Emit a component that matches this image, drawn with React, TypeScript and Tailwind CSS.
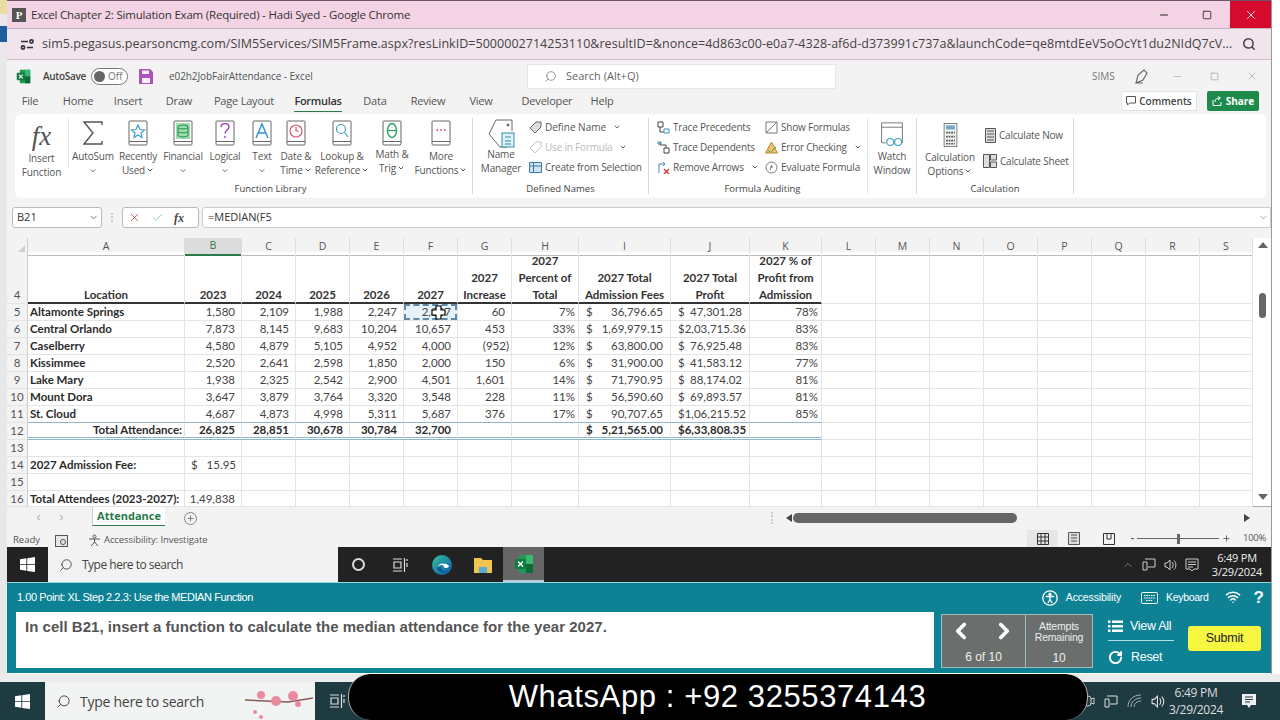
import type { ReactNode } from "react";
import { Check, ChevronDown, ChevronLeft, ChevronRight, Minus, Plus, RotateCw, Search, Square, Wifi, X } from "lucide-react";

const ui = "font-['Open_Sans',sans-serif]";
const sheet = "font-['Lato',sans-serif]";
const arial = "font-['Liberation_Sans',Arial,sans-serif]";
const gridCols = "grid grid-cols-[21px_157px_57px_54px_54px_54px_54px_54px_67px_92px_79px_72px_54px_54px_54px_54px_54px_54px_54px_53px]";
const headCell = "items-end justify-center border-b-[#333] shadow-[inset_0_-1px_0_#333]";
const totalLine = "border-b-[3px] border-double border-b-[#8fb6c9]";

const columns = ["A", "B", "C", "D", "E", "F", "G", "H", "I", "J", "K", "L", "M", "N", "O", "P", "Q", "R", "S"];

const rows = [
    { n: 5, name: "Altamonte Springs", years: ["1,580", "2,109", "1,988", "2,247", "2,307"], inc: "60", pct: "7%", fees: "36,796.65", profit: "47,301.28", share: "78%" },
    { n: 6, name: "Central Orlando", years: ["7,873", "8,145", "9,683", "10,204", "10,657"], inc: "453", pct: "33%", fees: "1,69,979.15", profit: "2,03,715.36", share: "83%" },
    { n: 7, name: "Caselberry", years: ["4,580", "4,879", "5,105", "4,952", "4,000"], inc: "(952)", pct: "12%", fees: "63,800.00", profit: "76,925.48", share: "83%" },
    { n: 8, name: "Kissimmee", years: ["2,520", "2,641", "2,598", "1,850", "2,000"], inc: "150", pct: "6%", fees: "31,900.00", profit: "41,583.12", share: "77%" },
    { n: 9, name: "Lake Mary", years: ["1,938", "2,325", "2,542", "2,900", "4,501"], inc: "1,601", pct: "14%", fees: "71,790.95", profit: "88,174.02", share: "81%" },
    { n: 10, name: "Mount Dora", years: ["3,647", "3,879", "3,764", "3,320", "3,548"], inc: "228", pct: "11%", fees: "56,590.60", profit: "69,893.57", share: "81%" },
    { n: 11, name: "St. Cloud", years: ["4,687", "4,873", "4,998", "5,311", "5,687"], inc: "376", pct: "17%", fees: "90,707.65", profit: "1,06,215.52", share: "85%" },
];

const menu: [string, number][] = [["File", 46], ["Home", 50], ["Insert", 50], ["Draw", 52], ["Page Layout", 78], ["Formulas", 70], ["Data", 44], ["Review", 62], ["View", 44], ["Developer", 88], ["Help", 22]];

function Cell({ className = "", children }: { className?: string; children?: ReactNode }) {
    return <div className={`flex items-center overflow-hidden whitespace-nowrap border-r border-b border-[#e3e5e5] ${className}`}>{children}</div>;
}

function Book({ stroke, children }: { stroke: string; children: ReactNode }) {
    return (
        <svg width="20" height="26" viewBox="0 0 20 26" fill="none">
            <rect x="1" y="1" width="18" height="24" rx="1" fill="#fff" stroke="#666" />
            <line x1="1" y1="21.5" x2="19" y2="21.5" stroke="#666" />
            <g stroke={stroke} fill="none" strokeWidth="1.2">{children}</g>
        </svg>
    );
}

function RibbonButton({ width, icon, lines, caret, raise }: { width: number; icon: ReactNode; lines: string[]; caret?: boolean; raise?: boolean }) {
    return (
        <div style={{ width }} className="flex flex-col items-center shrink-0 pt-[4px]">
            <div className="h-[29px] flex items-center justify-center">{icon}</div>
            <div className={`flex flex-col items-center text-[10px] tracking-[-0.15px] leading-[13.5px] text-[#555] whitespace-nowrap ${raise ? "mt-[1px]" : "mt-[3px]"}`}>
                {lines.map((l, i) => (
                    <span key={i} className="flex items-center gap-[1px]">
                        {l}
                        {caret && i === lines.length - 1 && l && <ChevronDown className="w-[8px] h-[8px] text-[#555]" strokeWidth={3} />}
                    </span>
                ))}
                {lines.length === 1 && <ChevronDown className="w-[8px] h-[13.5px] text-[#666]" strokeWidth={3} />}
            </div>
        </div>
    );
}

function SmallItem({ icon, label, caret, muted, className = "" }: { icon: ReactNode; label: string; caret?: boolean; muted?: boolean; className?: string }) {
    return (
        <div className={`flex items-center gap-[3px] h-[20px] whitespace-nowrap text-[10px] ${muted ? "text-[#bbb]" : "text-[#555]"} ${className}`}>
            {icon}
            <span>{label}</span>
            {caret && <ChevronDown className="w-[8px] h-[8px] ml-[4px] text-[#666]" strokeWidth={3} />}
        </div>
    );
}

function GroupLabel({ children }: { children: ReactNode }) {
    return <div className="h-[16px] text-center text-[9.5px] leading-[14px] text-[#444]">{children}</div>;
}

function Separator() {
    return <div className="w-px h-[76px] mt-[4px] bg-[#d8d8d8] shrink-0" />;
}

function WinLogo({ size, color = "#fff" }: { size: number; color?: string }) {
    return (
        <svg width={size} height={size} viewBox="0 0 16 16" fill={color}>
            <path d="M0 2.3 6.8 1.3V7.6H0ZM7.7 1.2 16 0V7.6H7.7ZM0 8.4H6.8V14.7L0 13.7ZM7.7 8.4H16V16L7.7 14.8Z" />
        </svg>
    );
}

function TaskView({ color }: { color: string }) {
    return (
        <svg width="15" height="14" viewBox="0 0 15 14" fill="none" stroke={color} strokeWidth="1.2">
            <path d="M0 1H9M0 13H9M1 4H8V10H1ZM11.5 0V14M14 1V3M14 5V9" />
        </svg>
    );
}

function ExcelLogo({ size }: { size: number }) {
    return (
        <svg width={size} height={size} viewBox="0 0 20 20">
            <rect x="5" y="1" width="14" height="18" rx="1" fill="#1f9a55" />
            <rect x="12" y="1" width="7" height="9" fill="#37b96f" />
            <rect x="12" y="10" width="7" height="9" fill="#0f6b3a" />
            <rect x="1" y="5" width="11" height="10" rx="1" fill="#107c41" />
            <path d="M4 7.5 9 12.5M9 7.5 4 12.5" stroke="#fff" strokeWidth="1.4" />
        </svg>
    );
}

function Header() {
    return (
        <>
            <div className={`h-[29px] bg-[#f3d3e4] border-t border-[#6b5566] border-b border-b-[#c9b5c1] flex items-center pl-[5px] ${ui}`}>
                <div className="w-[14px] h-[14px] bg-[#555] text-white text-[11px] leading-[14px] text-center font-['Liberation_Serif',serif] font-bold">P</div>
                <span className="ml-[5px] text-[11.5px] tracking-[-0.2px] text-[#333] flex-1 whitespace-nowrap">Excel Chapter 2: Simulation Exam (Required) - Hadi Syed - Google Chrome</span>
                <Minus className="w-[12px] h-[12px] text-[#222]" strokeWidth={2} />
                <Square className="w-[10px] h-[10px] ml-[32px] text-[#222]" strokeWidth={2} />
                <div className="w-[41px] h-full ml-[18px] bg-[#d60a2c] flex items-center justify-center">
                    <X className="w-[14px] h-[14px] text-white" strokeWidth={1.5} />
                </div>
            </div>
            <div className={`h-[31px] bg-[#f1e4ec] border-b border-[#cbbcc5] flex items-center pl-[13px] pr-[15px] ${ui}`}>
                <svg width="15" height="13" viewBox="0 0 15 13" fill="none" stroke="#333" strokeWidth="1.6">
                    <path d="M1 3.5H8M13 9.5H7" />
                    <circle cx="11.5" cy="3.5" r="1.6" />
                    <circle cx="3" cy="9.5" r="1.6" />
                </svg>
                <span className="ml-[7px] text-[12.5px] tracking-[0.03px] text-[#444] flex-1 whitespace-nowrap overflow-hidden">sim5.pegasus.pearsoncmg.com/SIM5Services/SIM5Frame.aspx?resLinkID=5000002714253110&amp;resultID=&amp;nonce=4d863c00-e0a7-4328-af6d-d373991c737a&amp;launchCode=qe8mtdEeV5oOcYt1du2NIdQ7cV...</span>
                <Search className="w-[14px] h-[14px] ml-[5px] text-[#444] shrink-0" strokeWidth={2.6} />
            </div>
        </>
    );
}

function TitleRows() {
    return (
        <div className={`${ui} text-[#555]`}>
            <div className="h-[28px] flex items-center pl-[9px] pr-[12px] pt-[4px]">
                <ExcelLogo size={15} />
                <span className="ml-[12px] w-[42px] text-[10px] font-semibold tracking-[-0.3px] text-[#444] whitespace-nowrap">AutoSave</span>
                <div className="ml-[6px] w-[37px] h-[17px] rounded-full border border-[#777] bg-white flex items-center pl-[2px] gap-[3px]">
                    <div className="w-[11px] h-[11px] rounded-full bg-[#666]" />
                    <span className="text-[10px] text-[#777]">Off</span>
                </div>
                <svg className="ml-[11px]" width="14" height="15" viewBox="0 0 14 15" fill="#b04fc0">
                    <path d="M0 0H11L14 3V15H0ZM3 1.5V5H10V1.5ZM3 9V14H11V9Z" />
                </svg>
                <span className="ml-[16px] w-[358px] text-[10px] tracking-[-0.1px] text-[#555] whitespace-nowrap">e02h2JobFairAttendance - Excel</span>
                <div className="w-[309px] h-[25px] bg-white border border-[#e6e6e6] flex items-center pl-[16px] gap-[9px]">
                    <Search className="w-[13px] h-[13px] text-[#777] -scale-x-100" strokeWidth={1.4} />
                    <span className="text-[11px] text-[#666]">Search (Alt+Q)</span>
                </div>
                <span className="ml-[256px] text-[10px] text-[#777]">SIMS</span>
                <svg className="ml-[20px]" width="14" height="15" viewBox="0 0 14 15" fill="none" stroke="#666" strokeWidth="1.1">
                    <path d="M1 14 3 6 9 1 12 4 8 11ZM1 14H8" />
                </svg>
                <Minus className="w-[11px] h-[11px] ml-[23px] text-[#999]" strokeWidth={1.2} />
                <Square className="w-[9px] h-[9px] ml-[27px] text-[#888]" strokeWidth={1.4} />
                <X className="w-[12px] h-[12px] ml-[27px] text-[#999]" strokeWidth={1.2} />
            </div>
            <div className="h-[26px] flex items-center pr-[12px]">
                {menu.map(([label, width]) => (
                    <div key={label} style={{ width }} className="flex justify-center">
                        <span className={`text-[11px] leading-[20px] whitespace-nowrap ${label === "Formulas" ? "border-b-[1.5px] border-[#2a7a4c] text-[#333] font-semibold tracking-[-0.3px]" : "text-[#555] tracking-[-0.2px]"}`}>{label}</span>
                    </div>
                ))}
                <div className="flex-1" />
                <div className="w-[76px] h-[20px] bg-white border border-[#e2e2e2] rounded-[2px] flex items-center justify-center gap-[3px] text-[10px] font-semibold text-[#444]">
                    <svg width="10" height="10" viewBox="0 0 10 10" fill="none" stroke="#555"><path d="M.5.5H9.5V7H3.5L1.5 9V7H.5Z" /></svg>
                    Comments
                </div>
                <div className="ml-[10px] w-[52px] h-[20px] bg-[#1e8a4c] rounded-[2px] flex items-center justify-center gap-[4px] text-[10px] font-bold text-white">
                    <svg width="10" height="10" viewBox="0 0 10 10" fill="none" stroke="#fff"><path d="M1 4V9.5H9V6M3 6C3 3 5 2 8 2M6 .5 8.5 2 6 4" /></svg>
                    Share
                </div>
            </div>
        </div>
    );
}

function Ribbon() {
    return (
        <div className={`ml-[8px] mr-[5px] h-[84px] bg-white rounded-[6px] flex ${ui}`}>
            <div className="w-[53px] shrink-0 flex flex-col items-center pt-[9px]">
                <span className="font-['Liberation_Serif',serif] italic text-[27px] leading-[26px] text-[#555]">fx</span>
                <span className="text-[10px] tracking-[-0.15px] leading-[13.5px] text-[#555] mt-[3px] text-center">Insert<br />Function</span>
            </div>
            <div className="w-px h-[50px] mt-[4px] bg-[#e4e4e4] shrink-0" />
            <div className="w-[403px] shrink-0 flex flex-col">
                <div className="flex h-[68px] pl-[2px]">
                    <RibbonButton width={44} lines={["AutoSum"]} icon={<svg width="20" height="24" viewBox="0 0 20 24" fill="none" stroke="#555" strokeWidth="1.4"><path d="M19 4V1H1L10 12 1 23H19V20" /></svg>} />
                    <RibbonButton width={46} lines={["Recently", "Used"]} caret icon={<Book stroke="#3a9fd0"><path d="M10 5 12 9.5 16.5 10 13 13 14 17.5 10 15 6 17.5 7 13 3.5 10 8 9.5Z" /></Book>} />
                    <RibbonButton width={44} lines={["Financial"]} icon={<Book stroke="#2f9e5c"><rect x="3" y="3" width="14" height="16" fill="#9fdcae" strokeWidth="0" /><path d="M5 7C5 4.5 15 4.5 15 7V15C15 17.5 5 17.5 5 15ZM5 7C5 9.5 15 9.5 15 7M5 11C5 13.5 15 13.5 15 11" /></Book>} />
                    <RibbonButton width={40} lines={["Logical"]} icon={<Book stroke="#9a3fb5"><path d="M6 7C6 2.5 14 2.5 14 7 14 10 10 10 10 13.5M10 16V18" strokeWidth="1.4" /></Book>} />
                    <RibbonButton width={34} lines={["Text"]} icon={<Book stroke="#2a8fd0"><path d="M4 18 10 4 16 18M6.5 13H13.5" strokeWidth="1.4" /></Book>} />
                    <RibbonButton width={34} lines={["Date &", "Time"]} caret icon={<Book stroke="#d8566f"><circle cx="10" cy="11" r="6" /><path d="M10 7V11H13" /></Book>} />
                    <RibbonButton width={58} lines={["Lookup &", "Reference"]} caret icon={<Book stroke="#3aa0c0"><circle cx="9" cy="9" r="4.5" /><path d="M12.5 12.5 16 17" /></Book>} />
                    <RibbonButton width={42} lines={["Math &", "Trig"]} caret raise icon={<Book stroke="#27a35f"><ellipse cx="10" cy="10.5" rx="4.5" ry="7" strokeWidth="1.4" /><path d="M5.5 10.5H14.5" /></Book>} />
                    <RibbonButton width={56} lines={["More", "Functions"]} caret icon={<Book stroke="#cc2b4c"><path d="M5.5 10H7M9.3 10H10.8M13 10H14.5" strokeWidth="1.6" /></Book>} />
                </div>
                <GroupLabel>Function Library</GroupLabel>
            </div>
            <Separator />
            <div className="w-[175px] shrink-0 flex flex-col">
                <div className="flex h-[68px]">
                    <div className="w-[56px] flex flex-col items-center pt-[2px] shrink-0">
                        <svg width="28" height="32" viewBox="0 0 28 32" fill="none" stroke="#666">
                            <path d="M9 4H25V15M20 31H13L2 18 9 4" />
                            <circle cx="21" cy="9" r="1" fill="#444" />
                            <rect x="15" y="17" width="12" height="14" fill="#dff1f6" stroke="#2f8fa8" />
                            <path d="M18 21H24M18 25H24M18 28H24" stroke="#2f8fa8" />
                        </svg>
                        <span className="text-[10px] tracking-[-0.15px] leading-[13.5px] text-[#555] text-center">Name<br />Manager</span>
                    </div>
                    <div className="flex flex-col pt-[3px]">
                        <SmallItem label="Define Name" caret icon={<svg width="13" height="13" viewBox="0 0 13 13" fill="#ddd" stroke="#666"><path d="M1 7 7 1H12V6L6 12Z" /></svg>} />
                        <SmallItem label="Use in Formula" caret muted className="tracking-[-0.2px]" icon={<svg width="13" height="13" viewBox="0 0 13 13" fill="none" stroke="#c4c4c4"><path d="M1 7 7 1H12V6L6 12Z" /></svg>} />
                        <SmallItem label="Create from Selection" className="tracking-[-0.2px]" icon={<svg width="13" height="13" viewBox="0 0 13 13" fill="#cfe3f3" stroke="#3a78b0"><path d="M.5 1.5H12.5V11.5H.5ZM.5 5H12.5M4.5 1.5V11.5" /></svg>} />
                    </div>
                </div>
                <GroupLabel>Defined Names</GroupLabel>
            </div>
            <Separator />
            <div className="w-[219px] shrink-0 flex flex-col pl-[8px]">
                <div className="flex h-[68px] pt-[3px]">
                    <div className="w-[108px] flex flex-col shrink-0">
                        <SmallItem label="Trace Precedents" className="tracking-[-0.2px]" icon={<svg width="13" height="13" viewBox="0 0 13 13" fill="none" stroke="#444"><path d="M1 1H6V6H1ZM3 6V11H7" /><path d="M7 8H12V12H7Z" stroke="#3a8fc0" /></svg>} />
                        <SmallItem label="Trace Dependents" className="tracking-[-0.2px]" icon={<svg width="13" height="13" viewBox="0 0 13 13" fill="none" stroke="#444"><path d="M7 7H12V12H7ZM3 1V4H9V7" /><path d="M1 1H4V3H1Z" stroke="#3a8fc0" /></svg>} />
                        <SmallItem label="Remove Arrows" caret className="tracking-[-0.2px]" icon={<svg width="13" height="13" viewBox="0 0 13 13" fill="none" stroke="#3a8fc0"><path d="M2 12V3H8M6 1 8 3 6 5" /><path d="M7 8 12 13M12 8 7 13" stroke="#d8363a" strokeWidth="1.4" /></svg>} />
                    </div>
                    <div className="flex flex-col">
                        <SmallItem label="Show Formulas" className="tracking-[-0.2px]" icon={<svg width="13" height="13" viewBox="0 0 13 13" fill="none" stroke="#777"><path d="M1 1H12V12H1ZM1 12 12 1" /></svg>} />
                        <SmallItem label="Error Checking" caret className="tracking-[-0.2px]" icon={<svg width="13" height="13" viewBox="0 0 13 13" fill="#f2c36b" stroke="#b9863a"><path d="M6.5 1 12.5 12H.5Z" /><path d="M3 9 5.5 11.5 11 6" stroke="#4aa05c" fill="none" /></svg>} />
                        <SmallItem label="Evaluate Formula" className="tracking-[-0.1px]" icon={<svg width="13" height="13" viewBox="0 0 13 13" fill="none" stroke="#777"><circle cx="6.5" cy="6.5" r="5.5" /><path d="M5 9 7 4M5 6H8" /></svg>} />
                    </div>
                </div>
                <GroupLabel>Formula Auditing</GroupLabel>
            </div>
            <div className="w-[49px] shrink-0 flex flex-col items-center pt-[4px] border-l border-[#e4e4e4] ml-[-1px] h-[76px] mt-[4px]">
                <svg width="26" height="26" viewBox="0 0 26 30" fill="none" stroke="#666">
                    <path d="M1 1H25V24M1 1V24H6M1 6H25" />
                    <circle cx="11" cy="23" r="4" stroke="#3a9fc0" strokeWidth="1.3" />
                    <circle cx="20" cy="23" r="4" stroke="#3a9fc0" strokeWidth="1.3" />
                </svg>
                <span className="text-[10px] tracking-[-0.15px] leading-[13.5px] text-[#555] text-center mt-[2px]">Watch<br />Window</span>
            </div>
            <Separator />
            <div className="w-[156px] shrink-0 flex flex-col">
                <div className="flex h-[68px]">
                    <div className="w-[66px] flex flex-col items-center pt-[9px] shrink-0">
                        <svg width="17" height="24" viewBox="0 0 17 30" fill="#f2f2f2" stroke="#666">
                            <rect x=".5" y=".5" width="16" height="29" />
                            <rect x="3" y="3" width="11" height="5" fill="#6fa8c8" stroke="none" />
                            <path d="M3 12H14M3 17H14M3 22H14M3 26H14" stroke="#555" strokeWidth="2" strokeDasharray="2.2 1" />
                        </svg>
                        <span className="text-[10px] tracking-[-0.15px] leading-[13.5px] text-[#555] text-center mt-[4px] whitespace-nowrap">Calculation</span>
                        <span className="flex items-center gap-[1px] text-[10px] tracking-[-0.15px] leading-[13.5px] text-[#555]">Options<ChevronDown className="w-[8px] h-[8px]" strokeWidth={3} /></span>
                    </div>
                    <div className="flex flex-col pt-[11px] gap-[6px]">
                        <SmallItem label="Calculate Now" className="ml-[2px] tracking-[-0.2px]" icon={<svg width="11" height="15" viewBox="0 0 11 15" fill="#ddd" stroke="#555"><path d="M.5.5H10.5V14.5H.5ZM2 3H9M2 6H9M2 9H9M2 12H9" /></svg>} />
                        <SmallItem label="Calculate Sheet" className="tracking-[-0.2px]" icon={<svg width="14" height="14" viewBox="0 0 14 14" fill="#ddd" stroke="#555"><path d="M.5.5H6.5V13.5H.5ZM7.5.5H13.5V6H7.5ZM7.5 8H13.5V13.5H7.5Z" /></svg>} />
                    </div>
                </div>
                <GroupLabel>Calculation</GroupLabel>
            </div>
            <Separator />
        </div>
    );
}

function FormulaBar() {
    return (
        <div className={`h-[40px] pt-[9px] pl-[5px] flex items-start ${ui}`}>
            <div className="w-[90px] h-[21px] bg-white border border-[#bbb] rounded-[3px] flex items-center justify-between pl-[4px] pr-[2px] text-[11px] text-[#333]">
                B21
                <ChevronDown className="w-[11px] h-[11px] text-[#555]" strokeWidth={1.6} />
            </div>
            <div className="ml-[9px] mt-[6px] w-[2px] h-[9px] border-l-2 border-dotted border-[#ccc]" />
            <div className="ml-[9px] w-[77px] h-[21px] bg-white border border-[#bbb] rounded-[3px] flex items-center pl-[5px] gap-[10px]">
                <X className="w-[13px] h-[13px] text-[#d24a4a]" strokeWidth={1.6} />
                <Check className="w-[13px] h-[13px] text-[#8cc79f]" strokeWidth={1.6} />
                <span className="font-['Liberation_Serif',serif] italic font-bold text-[12px] text-[#444]">fx</span>
            </div>
            <div className="ml-[3px] flex-1 h-[21px] bg-white border border-[#ccc] rounded-l-[3px] flex items-center justify-between pl-[5px] pr-[1px] text-[11px] text-[#333]">
                =MEDIAN(F5
                <ChevronDown className="w-[11px] h-[11px] text-[#777]" strokeWidth={1.4} />
            </div>
        </div>
    );
}

function RowNum({ n, className = "" }: { n: number | string; className?: string }) {
    return <Cell className={`justify-center bg-[#f3f3f3] text-[#555] text-[11.5px] border-r-[#ccc] ${className}`}>{n}</Cell>;
}

function Sheet() {
    const pad = "justify-end pr-[6px]";
    const plain = "h-[17px]";
    const blanks = (from: number, n: number) => Array.from({ length: n }, (_, i) => <Cell key={from + i} />);

    return (
        <div className={`flex h-[269px] bg-white border-b border-[#aaa] ${sheet} text-[11.5px] text-[#444]`}>
            <div className="w-[1246px] shrink-0">
                <div className={`${gridCols} h-[14px] bg-[#f3f3f3]`}>
                    <div className="border-r border-b border-[#ccc] flex items-end justify-end">
                        <div className="w-0 h-0 border-l-[9px] border-l-transparent border-b-[9px] border-b-[#cfcfcf] mr-[2px] mb-[1px]" />
                    </div>
                    {columns.map((c) => (
                        <div key={c} className={`flex items-center justify-center border-r border-[#ddd] ${ui} text-[10.5px] ${c === "B" ? "bg-[#dcdcdc] border-b-2 border-b-[#2a7a4c] text-[#2a7a4c]" : "border-b border-b-[#bbb] text-[#555]"}`}>{c}</div>
                    ))}
                </div>

                <div className={`${gridCols} h-[52px] font-bold text-[#333] leading-[17px] text-center`}>
                    <Cell className="items-end justify-center bg-[#f3f3f3] font-normal text-[#555] border-r-[#ccc]">4</Cell>
                    <Cell className={headCell}>Location</Cell>
                    {["2023", "2024", "2025", "2026", "2027"].map((y) => (
                        <Cell key={y} className={headCell}>{y}</Cell>
                    ))}
                    <Cell className={headCell}><span>2027<br />Increase</span></Cell>
                    <Cell className={headCell}><span>2027<br />Percent of<br />Total</span></Cell>
                    <Cell className={headCell}><span>2027 Total<br />Admission Fees</span></Cell>
                    <Cell className={headCell}><span>2027 Total<br />Profit</span></Cell>
                    <Cell className={headCell}><span>2027 % of<br />Profit from<br />Admission</span></Cell>
                    {blanks(100, 8)}
                </div>

                {rows.map((r) => {
                    const line = r.n === 11 ? "border-b-[#8fb6c9]" : "";
                    return (
                        <div key={r.n} className={`${gridCols} ${plain}`}>
                            <RowNum n={r.n} />
                            <Cell className={`pl-[2px] font-bold text-[#2b2b2b] ${line}`}>{r.name}</Cell>
                            {r.years.map((v, i) =>
                                r.n === 5 && i === 4 ? (
                                    <Cell key={i} className={`${pad} relative bg-[#e6f3f8]`}>
                                        {v}
                                        <span className="absolute inset-0 border-2 border-dashed border-[#5d8aa8]" />
                                        <svg className="absolute left-[27px] top-[1px]" width="15" height="15" viewBox="0 0 15 15" fill="#fff" stroke="#000" strokeWidth="1.2">
                                            <path d="M5 1H10V5H14V10H10V14H5V10H1V5H5Z" />
                                        </svg>
                                    </Cell>
                                ) : (
                                    <Cell key={i} className={`${pad} ${line}`}>{v}</Cell>
                                ),
                            )}
                            <Cell className={`justify-end ${r.inc.startsWith("(") ? "pr-[2px]" : "pr-[6px]"} ${line}`}>{r.inc}</Cell>
                            <Cell className={`justify-end pr-[3px] ${line}`}>{r.pct}</Cell>
                            <Cell className={`justify-between px-[7px] ${line}`}><span>$</span><span>{r.fees}</span></Cell>
                            <Cell className={`justify-between px-[7px] ${line}`}><span>$</span><span>{r.profit}</span></Cell>
                            <Cell className={`justify-end pr-[3px] ${line}`}>{r.share}</Cell>
                            {blanks(200 + r.n * 10, 8)}
                        </div>
                    );
                })}

                <div className={`${gridCols} ${plain} font-bold text-[#2b2b2b]`}>
                    <RowNum n={12} className="font-normal" />
                    <Cell className={`justify-end pr-[2px] ${totalLine}`}>Total Attendance:</Cell>
                    {["26,825", "28,851", "30,678", "30,784", "32,700"].map((v) => (
                        <Cell key={v} className={`${pad} ${totalLine}`}>{v}</Cell>
                    ))}
                    <Cell className={totalLine} />
                    <Cell className={totalLine} />
                    <Cell className={`justify-between px-[7px] ${totalLine}`}><span>$</span><span>5,21,565.00</span></Cell>
                    <Cell className={`justify-between px-[7px] ${totalLine}`}><span>$</span><span>6,33,808.35</span></Cell>
                    <Cell className={totalLine} />
                    {blanks(400, 8)}
                </div>

                <div className={`${gridCols} ${plain}`}><RowNum n={13} />{blanks(500, 19)}</div>
                <div className={`${gridCols} ${plain}`}>
                    <RowNum n={14} />
                    <Cell className="pl-[2px] font-bold text-[#2b2b2b]">2027 Admission Fee:</Cell>
                    <Cell className="justify-between pl-[6px] pr-[5px]"><span>$</span><span>15.95</span></Cell>
                    {blanks(600, 17)}
                </div>
                <div className={`${gridCols} ${plain}`}><RowNum n={15} />{blanks(700, 19)}</div>
                <div className={`${gridCols} h-[16px]`}>
                    <RowNum n={16} />
                    <Cell className="pl-[2px] font-bold text-[#2b2b2b]">Total Attendees (2023-2027):</Cell>
                    <Cell className={pad}>1,49,838</Cell>
                    {blanks(800, 17)}
                </div>
            </div>

            <div className="w-[19px] flex flex-col items-center pl-[1px] pt-[4px] pb-[6px] bg-white">
                <div className="w-0 h-0 border-l-[5px] border-r-[5px] border-b-[6px] border-l-transparent border-r-transparent border-b-[#666]" />
                <div className="w-[7px] h-[25px] mt-[45px] rounded-full bg-[#666]" />
                <div className="flex-1" />
                <div className="w-0 h-0 border-l-[5px] border-r-[5px] border-t-[6px] border-l-transparent border-r-transparent border-t-[#666]" />
            </div>
        </div>
    );
}

function TabStrip() {
    return (
        <>
            <div className={`h-[23px] flex items-start ${ui}`}>
                <ChevronLeft className="w-[9px] h-[9px] ml-[27px] mt-[6px] text-[#bbb]" strokeWidth={3} />
                <ChevronRight className="w-[9px] h-[9px] ml-[14px] mt-[6px] text-[#bbb]" strokeWidth={3} />
                <div className="ml-[26px] w-[73px] h-[19px] bg-white border-l border-b-[1.5px] border-[#2a7a4c] border-l-[#ccc] text-center text-[11px] leading-[17px] font-bold text-[#2a7a4c]">Attendance</div>
                <div className="ml-[19px] mt-[5px] w-[13px] h-[13px] rounded-full border border-[#888] flex items-center justify-center">
                    <Plus className="w-[9px] h-[9px] text-[#666]" strokeWidth={2} />
                </div>
                <div className="ml-[574px] mt-[5px] w-[2px] h-[12px] border-l-2 border-dotted border-[#ccc]" />
                <div className="ml-[13px] mt-[7px] w-0 h-0 border-y-[4px] border-r-[6px] border-y-transparent border-r-[#444]" />
                <div className="ml-[1px] mt-[6px] w-[224px] h-[10px] rounded-full bg-[#666]" />
                <div className="ml-[227px] mt-[7px] w-0 h-0 border-y-[4px] border-l-[6px] border-y-transparent border-l-[#444]" />
            </div>
            <div className={`h-[17px] flex items-center pl-[6px] text-[9.5px] text-[#555] ${ui}`}>
                <span className="w-[42px] pt-[3px]">Ready</span>
                <svg className="mt-[3px]" width="13" height="13" viewBox="0 0 13 13" fill="#e6e6e6" stroke="#555"><rect x=".5" y="1.5" width="12" height="11" /><circle cx="8" cy="8" r="2.5" /></svg>
                <svg className="ml-[20px] mt-[3px]" width="13" height="13" viewBox="0 0 13 13" fill="none" stroke="#555"><circle cx="6.5" cy="2.5" r="1.5" /><path d="M1 5H12M6.5 5V8L3 12M6.5 8 10 12" /></svg>
                <span className="ml-[3px] w-[923px] pt-[3px] tracking-[-0.1px]">Accessibility: Investigate</span>
                <div className="w-[31px] h-[17px] bg-[#e6e6e6] flex items-center justify-center">
                    <svg width="12" height="12" viewBox="0 0 12 12" fill="none" stroke="#333"><path d="M.5.5H11.5V11.5H.5ZM.5 4H11.5M.5 8H11.5M4 .5V11.5M8 .5V11.5" /></svg>
                </div>
                <svg className="ml-[10px]" width="12" height="13" viewBox="0 0 12 13" fill="#ddd" stroke="#555"><path d="M.5.5H11.5V12.5H.5ZM3 3H9M3 6H9M3 9H9" /></svg>
                <svg className="ml-[23px]" width="12" height="12" viewBox="0 0 12 12" fill="none" stroke="#333"><path d="M.5.5H11.5V11.5H.5ZM4 .5V6H8V.5" /></svg>
                <span className="ml-[16px] font-bold text-[#444]">-</span>
                <div className="ml-[3px] w-[82px] h-px bg-[#666] flex justify-center items-center">
                    <div className="w-[3px] h-[10px] bg-[#666]" />
                </div>
                <Plus className="w-[9px] h-[9px] ml-[3px] text-[#444]" strokeWidth={2} />
                <span className="ml-[12px] tracking-[-0.3px]">100%</span>
            </div>
        </>
    );
}

function InnerTaskbar() {
    return (
        <div className={`h-[35px] bg-[#222] flex items-center ${ui}`}>
            <div className="w-[41px] flex justify-center"><WinLogo size={15} /></div>
            <div className="w-[290px] h-full bg-[#f2f2f2] flex items-center pl-[11px] gap-[9px] text-[12px] tracking-[-0.5px] text-[#444]">
                <Search className="w-[14px] h-[14px] -scale-x-100 text-[#333]" strokeWidth={1.4} />
                Type here to search
            </div>
            <div className="w-[41px] flex justify-center">
                <div className="w-[13px] h-[13px] rounded-full border-2 border-[#ddd]" />
            </div>
            <div className="w-[42px] flex justify-center"><TaskView color="#ddd" /></div>
            <div className="w-[41px] flex justify-center">
                <svg width="20" height="20" viewBox="0 0 20 20">
                    <defs>
                        <linearGradient id="edge" x1="0" y1="0" x2="1" y2="1">
                            <stop offset="0" stopColor="#35c1a0" />
                            <stop offset="1" stopColor="#0c59a4" />
                        </linearGradient>
                    </defs>
                    <circle cx="10" cy="10" r="10" fill="url(#edge)" />
                    <path d="M6 12C6 8 14 7 17 11 17 13 12 14 12 12 12 10 8 9 6 12Z" fill="#fff" />
                    <path d="M5 14C8 19 13 18 16 16 12 17 8 15 9 11 7 11 5 12 5 14Z" fill="#0c59a4" />
                </svg>
            </div>
            <div className="w-[41px] flex justify-center">
                <svg width="18" height="16" viewBox="0 0 18 16">
                    <path d="M0 1H7L9 3H18V16H0Z" fill="#f0c64f" />
                    <rect x="5" y="10" width="8" height="6" fill="#5aa9d6" />
                </svg>
            </div>
            <div className="w-[41px] h-full bg-[#666] border-b-2 border-[#bcd] flex items-center justify-center"><ExcelLogo size={20} /></div>
            <div className="flex-1" />
            <div className="flex items-center gap-[8px] pr-[8px] text-white">
                <ChevronDown className="w-[12px] h-[12px] rotate-180 text-[#bbb]" strokeWidth={1.2} />
                <svg width="14" height="13" viewBox="0 0 14 13" fill="none" stroke="#ccc"><path d="M3 1H13V9H6M1 4H5V12H1Z" /></svg>
                <svg width="13" height="12" viewBox="0 0 13 12" fill="none" stroke="#ccc"><path d="M1 4V8H3L6 11V1L3 4ZM8 3C9.5 5 9.5 7 8 9M10 1.5C12.5 4 12.5 8 10 10.5" /></svg>
                <svg width="14" height="14" viewBox="0 0 14 14" fill="none" stroke="#ccc"><path d="M1 1H13V11H9L7 13 5 11H1ZM3 4H11M3 6.5H11M3 9H8" /></svg>
                <div className="ml-[4px] w-[52px] flex flex-col items-center text-[11px] leading-[14px] tracking-[-0.2px] text-[#eee]">
                    <span>6:49 PM</span>
                    <span>3/29/2024</span>
                </div>
            </div>
        </div>
    );
}

function QuestionPanel() {
    return (
        <div className={`h-[92px] bg-[#0e8294] border-t border-[#9bd3dc] border-b border-b-white flex flex-col ${arial}`}>
            <div className="h-[29px] flex items-center pl-[10px] pr-[7px] text-white">
                <span className="text-[11px] tracking-[-0.42px] flex-1 whitespace-nowrap">1.00 Point: XL Step 2.2.3: Use the MEDIAN Function</span>
                <svg width="16" height="16" viewBox="0 0 16 16" fill="none" stroke="#fff"><circle cx="8" cy="8" r="7.2" strokeWidth="1.3" /><circle cx="8" cy="4.3" r="1.2" fill="#fff" /><path d="M3.8 6.5H12.2M8 6.5V9.5L5.8 13M8 9.5 10.2 13" strokeWidth="1.3" /></svg>
                <span className="ml-[8px] text-[10.5px] tracking-[-0.15px]">Accessibility</span>
                <svg className="ml-[20px]" width="17" height="12" viewBox="0 0 17 12" fill="none" stroke="#fff"><rect x=".5" y=".5" width="16" height="11" rx="1" /><path d="M3 3.5H14M3 6H14M5 8.5H12" strokeDasharray="1.5 .8" /></svg>
                <span className="ml-[8px] text-[10.5px] tracking-[-0.3px]">Keyboard</span>
                <Wifi className="w-[16px] h-[16px] ml-[16px] -mt-[2px]" strokeWidth={2.2} />
                <span className="ml-[13px] text-[17px] font-bold leading-none">?</span>
            </div>
            <div className="flex flex-1 items-start pl-[9px]">
                <div className="w-[918px] h-[56px] bg-white pl-[9px] pt-[6px] text-[15px] font-bold text-[#555] leading-[18px] tracking-[0.02px]">
                    In cell B21, insert a function to calculate the median attendance for the year 2027.
                </div>
                <div className="ml-[7px] mt-[2px] w-[85px] h-[54px] bg-[#6a6e6c] border border-[#9fbcc0] flex flex-col items-center text-white">
                    <div className="flex gap-[17px] mt-[3px] -ml-[2px]">
                        <ChevronLeft className="w-[26px] h-[26px]" strokeWidth={3.5} />
                        <ChevronRight className="w-[26px] h-[26px]" strokeWidth={3.5} />
                    </div>
                    <span className="mt-[6px] text-[12px] leading-[14px] text-[#eee]">6 of 10</span>
                </div>
                <div className="mt-[2px] w-[67px] h-[54px] bg-[#6a6e6c] border border-[#9fbcc0] border-l-0 flex flex-col items-center text-[#eee] text-[10.5px] leading-[11px] tracking-[-0.2px] pt-[6px] text-center">
                    <span>Attempts<br />Remaining</span>
                    <span className="mt-[8px] text-[12px] leading-[14px]">10</span>
                </div>
                <div className="ml-[15px] w-[66px] flex flex-col text-white text-[12.5px] tracking-[-0.3px]">
                    <div className="h-[29px] flex items-center gap-[7px] border-b border-[#b7dce2]">
                        <svg width="15" height="13" viewBox="0 0 15 13" fill="#fff"><path d="M0 .5H2.5V3H0ZM4 .5H15V3H4ZM0 5H2.5V7.5H0ZM4 5H15V7.5H4ZM0 9.5H2.5V12H0ZM4 9.5H15V12H4Z" /></svg>
                        View All
                    </div>
                    <div className="h-[31px] flex items-center gap-[8px] pt-[2px]">
                        <RotateCw className="w-[15px] h-[15px]" strokeWidth={3} />
                        Reset
                    </div>
                </div>
                <div className="ml-[14px] mt-[14px] w-[73px] h-[25px] bg-[#f7f742] rounded-[3px] flex items-center justify-center text-[12.5px] tracking-[-0.2px] text-[#222]">Submit</div>
            </div>
        </div>
    );
}

function DesktopTaskbar() {
    return (
        <div className={`h-[38px] bg-[#1f3b42] flex items-center ${ui}`}>
            <div className="w-[45px] flex justify-center"><WinLogo size={15} /></div>
            <div className="w-[270px] h-full bg-[#f2f3f3] flex items-center pl-[11px] gap-[9px] text-[14px] tracking-[-0.25px] text-[#444]">
                <Search className="w-[15px] h-[15px] -scale-x-100 text-[#333]" strokeWidth={1.4} />
                Type here to search
                <svg className="ml-[30px]" width="70" height="38" viewBox="0 0 70 38">
                    <path d="M2 18 45 20 70 16" stroke="#8a5a55" strokeWidth="1.5" fill="none" />
                    <g fill="#e88aa0">
                        <circle cx="18" cy="13" r="4" />
                        <circle cx="33" cy="19" r="5" />
                        <circle cx="50" cy="14" r="5" />
                        <circle cx="55" cy="22" r="3" />
                        <circle cx="12" cy="30" r="2" />
                        <circle cx="18" cy="35" r="2" />
                    </g>
                </svg>
            </div>
            <div className="w-[44px] flex justify-center"><TaskView color="#ddd" /></div>
            <div className="flex-1" />
            <div className="flex items-center gap-[9px] text-[#ddd]">
                <svg width="13" height="14" viewBox="0 0 13 14" fill="none" stroke="#ccc"><rect x="1" y="2" width="8" height="10" rx="3" /><path d="M9 5 12 4V10L9 9" /></svg>
                <svg width="14" height="13" viewBox="0 0 14 13" fill="none" stroke="#ddd"><path d="M3 1H13V9H6M1 4H5V12H1Z" /></svg>
                <svg width="15" height="14" viewBox="0 0 15 14" fill="none" stroke="#aab"><path d="M1 13C1 6 6 1 14 1M4 13C4 8 8 4 14 4M7 13C7 10 10 7 14 7" /></svg>
                <svg width="14" height="13" viewBox="0 0 13 12" fill="none" stroke="#ddd"><path d="M1 4V8H3L6 11V1L3 4ZM8 3C9.5 5 9.5 7 8 9M10 1.5C12.5 4 12.5 8 10 10.5" /></svg>
            </div>
            <div className="ml-[1px] w-[60px] flex flex-col items-center text-[12px] leading-[17px] tracking-[-0.3px] text-[#ddd]">
                <span>6:49 PM</span>
                <span>3/29/2024</span>
            </div>
            <svg className="ml-[15px] mr-[23px]" width="16" height="16" viewBox="0 0 16 16" fill="#eee"><path d="M1 1H15V12H10L8 15 6 12H1Z" /><path d="M4 4H12M4 6.5H12M4 9H9" stroke="#1f3b42" /></svg>
        </div>
    );
}

export default function App() {
    return (
        <div className="relative w-[1280px] h-[720px] overflow-hidden bg-[#ededed]">
            <div className="flex h-[674px]">
                <div className="w-[7px] shrink-0 flex flex-col bg-[#e8e8e8]">
                    <div className="h-[14px] bg-[#e8dca0]" />
                    <div className="h-[12px]" />
                    <div className="h-[16px] bg-[#1d5f9e]" />
                </div>
                <div className="w-[1265px] shrink-0 flex flex-col bg-[#f3f3f3] border-r border-[#999]">
                    <Header />
                    <TitleRows />
                    <Ribbon />
                    <FormulaBar />
                    <Sheet />
                    <TabStrip />
                    <InnerTaskbar />
                    <QuestionPanel />
                </div>
                <div className="flex-1 bg-white" />
            </div>
            <div className="h-[8px] bg-[#ececec]" />
            <DesktopTaskbar />

            <div className={`absolute left-[348px] top-[674px] w-[740px] h-[46px] bg-black rounded-[22px] border-l border-r border-white/70 flex items-center justify-center text-white text-[31px] tracking-[0.6px] ${arial} pr-[1px]`}>
                WhatsApp : +92 3255374143
            </div>
        </div>
    );
}
